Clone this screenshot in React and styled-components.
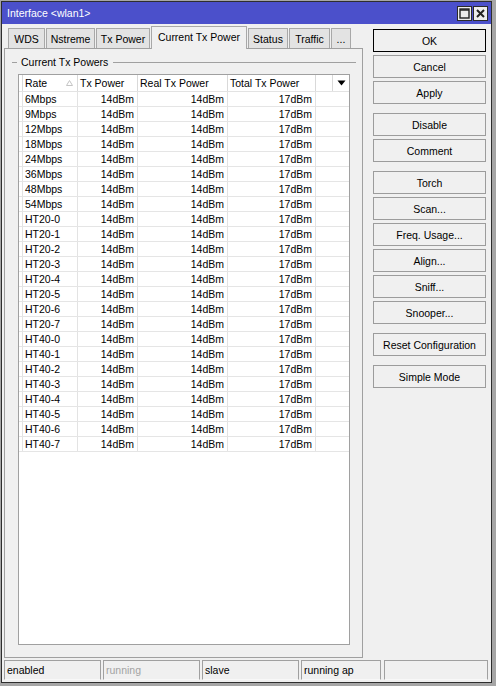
import styled, { createGlobalStyle } from 'styled-components';

const GlobalStyle = createGlobalStyle`
  html, body {
    margin: 0;
    padding: 0;
    background: #a6a6a6;
  }
  body {
    font-family: "Liberation Sans", Arial, sans-serif;
    font-size: 10.5px;
    color: #000;
  }
  * {
    box-sizing: border-box;
  }
`;

const Window = styled.div`
  margin: 1px 0 0 1px;
  width: 491px;
  height: 682px;
  border: 1px solid #2e2e2e;
  background: #f0f0f0;
  display: flex;
  flex-direction: column;
`;

const TitleBar = styled.div`
  height: 22px;
  background: #4b50cb;
  color: #fff;
  display: flex;
  align-items: center;
  justify-content: space-between;
  padding: 0 3px 0 5px;
`;

const TitleText = styled.span`
  font-size: 10.5px;
`;

const TitleButtons = styled.div`
  display: flex;
  gap: 1px;
  margin-top: 1px;
`;

const TitleBtn = styled.div`
  width: 15px;
  height: 15px;
  background: #ededed;
  border: 1px solid #2a2a2a;
  display: flex;
  align-items: center;
  justify-content: center;
`;

const Main = styled.div`
  height: 634px;
  display: flex;
  padding: 0 5px 0 2px;
`;

const LeftCol = styled.div`
  width: 359px;
  display: flex;
  flex-direction: column;
`;

const TabRow = styled.div`
  height: 24px;
  display: flex;
  align-items: flex-end;
  gap: 1px;
  padding-left: 4px;
  position: relative;
  z-index: 1;
`;

const Tab = styled.div`
  width: ${(p) => p.$w}px;
  height: ${(p) => (p.$active ? 23 : 20)}px;
  margin-bottom: ${(p) => (p.$active ? -1 : 0)}px;
  background: ${(p) => (p.$active ? '#f0f0f0' : '#e3e3e3')};
  border: 1px solid #a8a8a8;
  border-bottom: none;
  display: flex;
  align-items: center;
  justify-content: center;
  padding-bottom: ${(p) => (p.$active ? 2 : 0)}px;
  white-space: nowrap;
`;

const Panel = styled.div`
  height: 610px;
  border: 1px solid #a0a0a0;
  display: flex;
  flex-direction: column;
  padding: 6px 12px 12px 13px;
`;

const GroupHeader = styled.div`
  height: 14px;
  display: flex;
  align-items: center;
  margin-left: -6px;
  margin-right: -6px;
`;

const GroupLine = styled.div`
  height: 1px;
  background: #a0a0a0;
  width: ${(p) => (p.$w ? `${p.$w}px` : 'auto')};
  flex: ${(p) => (p.$w ? '0 0 auto' : '1')};
`;

const GroupLabel = styled.span`
  padding: 0 5px 0 4px;
`;

const Table = styled.div`
  flex: 1;
  margin-top: 5px;
  background: #fff;
  border: 1px solid #a0a0a0;
`;

const HeaderRow = styled.div`
  display: flex;
  height: 17px;
  border-bottom: 1px solid #e3e3e3;
`;

const Row = styled.div`
  display: flex;
  height: 15px;
  border-bottom: 1px solid #e5e5e5;
`;

const Cell = styled.div`
  width: ${(p) => (p.$w ? `${p.$w}px` : 'auto')};
  flex: ${(p) => (p.$w ? '0 0 auto' : '1')};
  border-right: ${(p) => (p.$last ? 'none' : `1px solid ${p.$head ? '#d9d9d9' : '#e3e3e3'}`)};
  display: flex;
  align-items: center;
  justify-content: ${(p) => (p.$right ? 'flex-end' : 'space-between')};
  padding: ${(p) => (p.$right ? '0 3px 0 0' : '0 0 0 2px')};
  white-space: nowrap;
  overflow: hidden;
`;

const ArrowCell = styled.div`
  width: 16px;
  display: flex;
  align-items: center;
  justify-content: center;
`;

const SortMark = styled.svg`
  margin-right: 4px;
`;

const ButtonCol = styled.div`
  flex: 1;
  margin-left: 10px;
  padding-top: 5px;
  display: flex;
  flex-direction: column;
  gap: 9px;
`;

const ButtonGroup = styled.div`
  display: flex;
  flex-direction: column;
  gap: 3px;
`;

const Btn = styled.div`
  height: 23px;
  border: 1px solid ${(p) => (p.$default ? '#000' : '#9c9c9c')};
  background: #f0f0f0;
  display: flex;
  align-items: center;
  justify-content: center;
  white-space: nowrap;
`;

const StatusBar = styled.div`
  display: flex;
  gap: 2px;
  margin-top: 2px;
  padding-left: 2px;
`;

const StatusCell = styled.div`
  width: ${(p) => p.$w}px;
  margin-right: ${(p) => p.$mr || 0}px;
  height: 20px;
  border: 1px solid #a0a0a0;
  border-bottom-color: #f8f8f8;
  color: ${(p) => (p.$dim ? '#a3a3a3' : '#000')};
  display: flex;
  align-items: center;
  padding-left: 2px;
`;

const tabs = [
  { label: 'WDS', w: 37 },
  { label: 'Nstreme', w: 49 },
  { label: 'Tx Power', w: 54 },
  { label: 'Current Tx Power', w: 96, active: true },
  { label: 'Status', w: 40 },
  { label: 'Traffic', w: 41 },
  { label: '...', w: 20 },
];

const rates = [
  '6Mbps', '9Mbps', '12Mbps', '18Mbps', '24Mbps', '36Mbps', '48Mbps', '54Mbps',
  'HT20-0', 'HT20-1', 'HT20-2', 'HT20-3', 'HT20-4', 'HT20-5', 'HT20-6', 'HT20-7',
  'HT40-0', 'HT40-1', 'HT40-2', 'HT40-3', 'HT40-4', 'HT40-5', 'HT40-6', 'HT40-7',
];

const buttonGroups = [
  [{ label: 'OK', def: true }, { label: 'Cancel' }, { label: 'Apply' }],
  [{ label: 'Disable' }, { label: 'Comment' }],
  [{ label: 'Torch' }, { label: 'Scan...' }, { label: 'Freq. Usage...' }, { label: 'Align...' }, { label: 'Sniff...' }, { label: 'Snooper...' }],
  [{ label: 'Reset Configuration' }],
  [{ label: 'Simple Mode' }],
];

const App = () => (
  <>
    <GlobalStyle />
    <Window>
      <TitleBar>
        <TitleText>Interface &lt;wlan1&gt;</TitleText>
        <TitleButtons>
          <TitleBtn>
            <svg width="11" height="11" viewBox="0 0 11 11">
              <rect x="1" y="1" width="9" height="9" fill="none" stroke="#222" strokeWidth="1.4" />
              <line x1="1" y1="2" x2="10" y2="2" stroke="#222" strokeWidth="1.5" />
            </svg>
          </TitleBtn>
          <TitleBtn>
            <svg width="11" height="11" viewBox="0 0 11 11">
              <path d="M2 2 L9 9 M9 2 L2 9" stroke="#222" strokeWidth="2" />
            </svg>
          </TitleBtn>
        </TitleButtons>
      </TitleBar>
      <Main>
        <LeftCol>
          <TabRow>
            {tabs.map((t) => (
              <Tab key={t.label} $w={t.w} $active={t.active}>{t.label}</Tab>
            ))}
          </TabRow>
          <Panel>
            <GroupHeader>
              <GroupLine $w={5} />
              <GroupLabel>Current Tx Powers</GroupLabel>
              <GroupLine />
            </GroupHeader>
            <Table>
              <HeaderRow>
                <Cell $w={4} $head />
                <Cell $w={55} $head>
                  Rate
                  <SortMark width="7" height="6" viewBox="0 0 7 6">
                    <path d="M3.5 0.5 L6.5 5.5 L0.5 5.5 Z" fill="#fff" stroke="#c4c4c4" />
                  </SortMark>
                </Cell>
                <Cell $w={60} $head>Tx Power</Cell>
                <Cell $w={90} $head>Real Tx Power</Cell>
                <Cell $w={88} $head>Total Tx Power</Cell>
                <Cell $w={17} $head />
                <ArrowCell>
                  <svg width="9" height="6" viewBox="0 0 9 6">
                    <path d="M0.5 0.5 L8.5 0.5 L4.5 5.5 Z" fill="#000" />
                  </svg>
                </ArrowCell>
              </HeaderRow>
              {rates.map((r) => (
                <Row key={r}>
                  <Cell $w={4} />
                  <Cell $w={55}>{r}</Cell>
                  <Cell $w={60} $right>14dBm</Cell>
                  <Cell $w={90} $right>14dBm</Cell>
                  <Cell $w={88} $right>17dBm</Cell>
                  <Cell $last />
                </Row>
              ))}
            </Table>
          </Panel>
        </LeftCol>
        <ButtonCol>
          {buttonGroups.map((g, i) => (
            <ButtonGroup key={i}>
              {g.map((b) => (
                <Btn key={b.label} $default={b.def}>{b.label}</Btn>
              ))}
            </ButtonGroup>
          ))}
        </ButtonCol>
      </Main>
      <StatusBar>
        <StatusCell $w={97}>enabled</StatusCell>
        <StatusCell $w={97} $dim>running</StatusCell>
        <StatusCell $w={97}>slave</StatusCell>
        <StatusCell $w={80} $mr={1}>running ap</StatusCell>
        <StatusCell $w={104} />
      </StatusBar>
    </Window>
  </>
);

export default App;
